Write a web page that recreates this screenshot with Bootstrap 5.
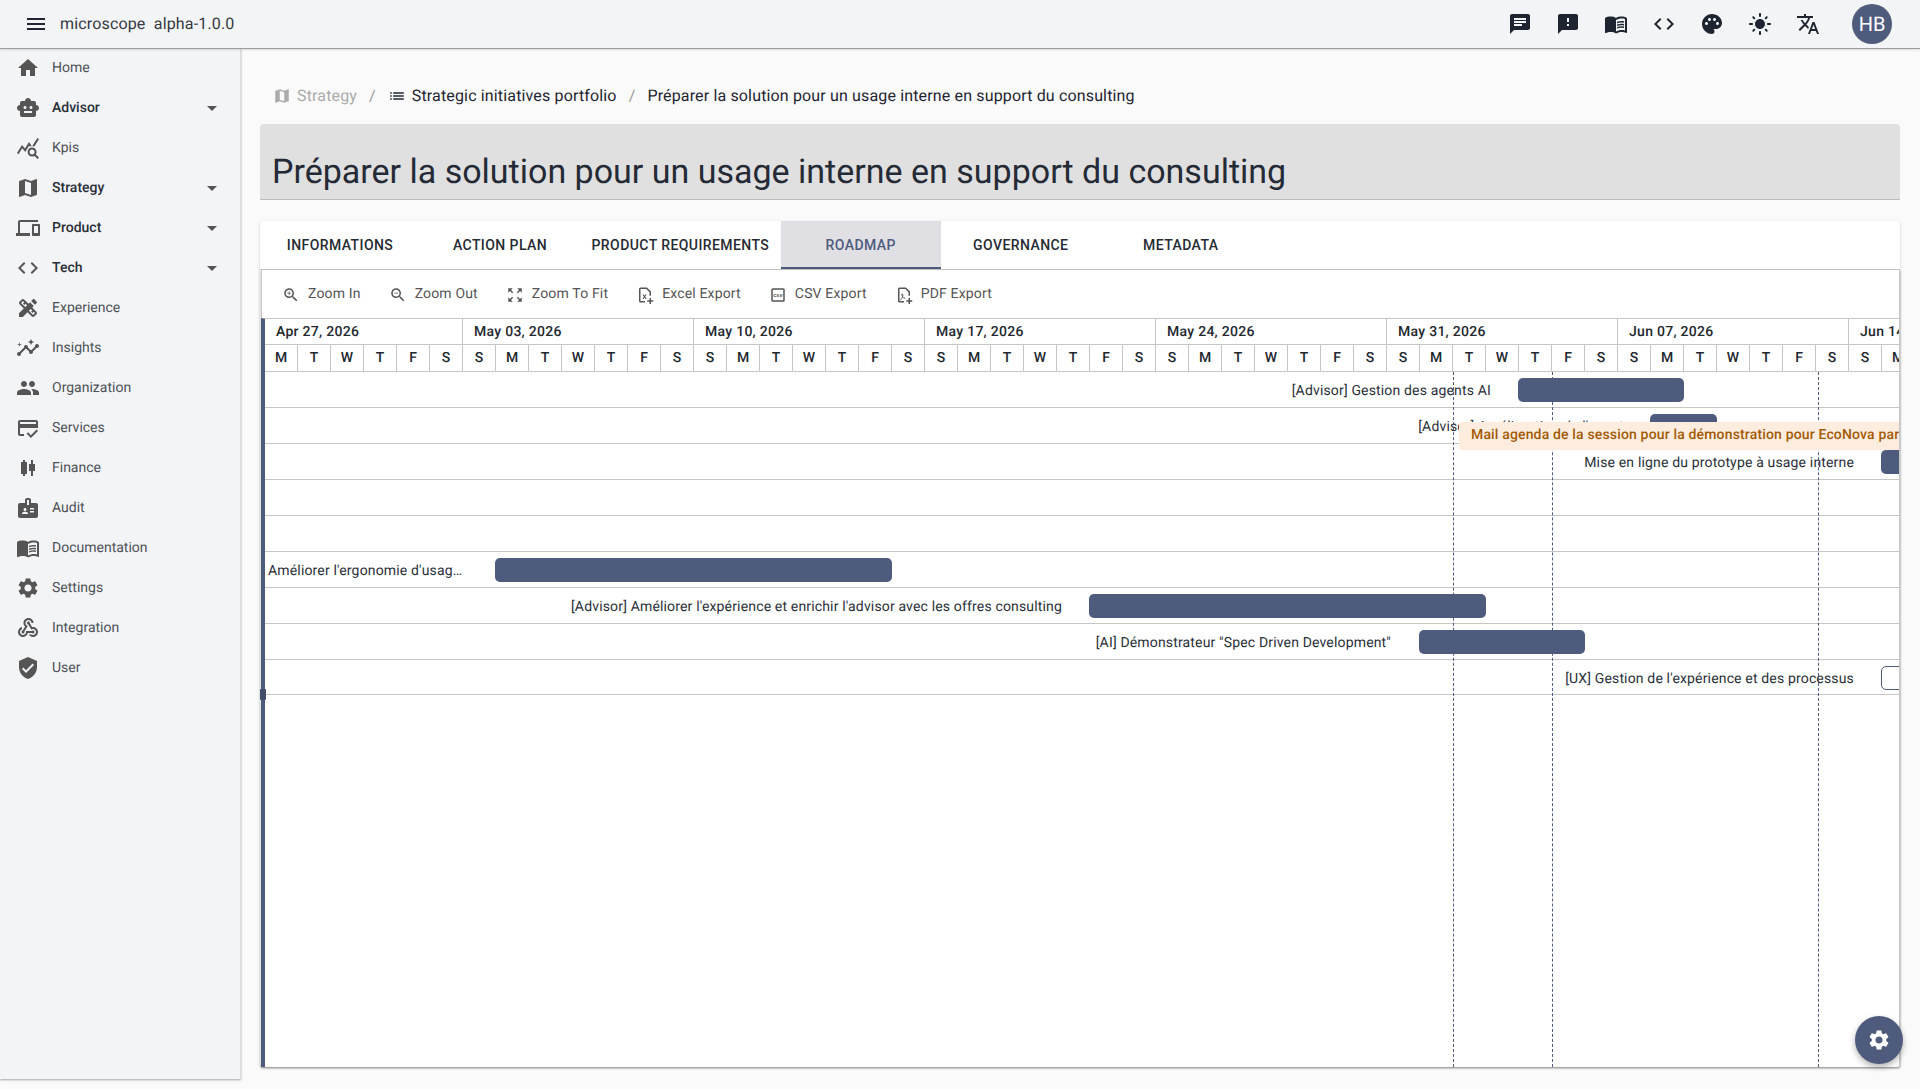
<!DOCTYPE html>
<html lang="fr">
<head>
<meta charset="utf-8">
<title>microscope</title>
<link rel="stylesheet" href="https://cdn.jsdelivr.net/npm/bootstrap@5.3.0/dist/css/bootstrap.min.css">
<style>
:root{--brand:#4f5b7d;--ink:#1f2530;--line:#c6c6c6}
html,body{height:100%}
body{font-family:Roboto,"Liberation Sans",sans-serif;background:#fafafa;color:var(--ink);overflow:hidden;font-size:14px;text-rendering:geometricPrecision}
.ic{width:24px;height:24px;fill:currentColor;flex:none;display:block}
.topbar{height:49px;background:#f3f4f6;border-bottom:1px solid #9c9c9c;padding:0 12px 0 24px;box-shadow:0 1px 2px rgba(0,0,0,.12);position:relative;z-index:3}
.brand-txt{font-size:16px;margin-left:12px;white-space:pre;color:#33393f;letter-spacing:.16px}
.top-ic{width:48px;display:flex;justify-content:center;color:var(--ink)}
.avatar{width:40px;height:40px;border-radius:50%;background:var(--brand);color:#fff;font-size:20px;margin-left:20px;margin-right:16px}
.sidenav{width:241px;flex:none;height:1031px;margin-top:-1px;background:#f3f4f6;border-right:1px solid #dfdfdf;box-shadow:0 1px 2px rgba(0,0,0,.35)}
.side-item{height:40px;padding:0 16px;color:#4d5157}
.side-item .lab{margin-left:12px;flex:1;padding-top:1px}
.side-item.par .lab{font-weight:500;color:#2a2f38}
.side-item .ic{color:#555}
.caret{width:24px;height:24px;fill:#555}
.content{flex:1;min-width:0;padding:0 20px 0 19px}
.crumbs{height:75px;padding:18px 0 0 13px;font-size:16px;letter-spacing:.15px}
.crumbs .ic{width:18px;height:18px}
.crumb-mute{color:#ababab}
.crumb-sep{color:#999;margin:0 12px}
.crumb-txt{margin-left:6px}
.headline{height:76px;background:#e0e0e0;border-bottom:1px solid #bdbdbd;border-radius:4px 4px 0 0;margin-bottom:21px;padding:24px 12px 0}
.headline h1{font-family:Roboto,sans-serif;font-weight:400;font-size:34px;margin:0;line-height:48px;color:#252b36}
.panel{background:#fff;height:846px;border-radius:4px;box-shadow:0 1px 3px rgba(0,0,0,.2);display:flex;flex-direction:column}
.tabbar{height:49px;border-bottom:1px solid var(--line);flex:none}
.tabx{min-width:160px;padding:0 11.5px;height:48px;display:flex;align-items:center;justify-content:center;text-transform:uppercase;font-weight:500;letter-spacing:.42px;color:#262b33;border:0;background:none;font-size:14px;white-space:nowrap}
.tabx.on{background:#e0e0e4;color:var(--brand);border-bottom:2px solid var(--brand);padding-top:2px}
.gwrap{flex:1;min-height:0;display:flex;flex-direction:column;position:relative;border-right:1px solid var(--line);margin-left:1px;border-left:1px solid var(--line);box-shadow:0 1px 2px rgba(0,0,0,.35)}
.tools{height:48px;flex:none;padding:1px 0 0 20px;gap:28px;color:#555}
.tool{display:flex;align-items:center;gap:8px;white-space:nowrap;letter-spacing:.16px}
.tool .ic{width:18px;height:18px}
.tool svg{fill:#555}
.csv-t{font-family:"Liberation Sans",sans-serif;font-size:7.5px;font-weight:700}
.gantt{flex:1;position:relative;overflow:hidden;border-top:1px solid var(--line);border-left:4px solid var(--brand);margin-left:-1px}
.gsplit{position:absolute;left:-2px;top:419px;width:6px;height:11px;background:#434d69;z-index:6;border-radius:1px}
.gweeks,.gdays{display:flex;border-bottom:1px solid var(--line);white-space:nowrap}
.gweeks{height:26px}
.gdays{height:27px}
.wk{flex:none;border-right:1px solid var(--line);padding-left:11px;font-weight:500;line-height:27px;color:#23282f;overflow:hidden;letter-spacing:.28px}
.dy{flex:none;width:33px;border-right:1px solid var(--line);text-align:center;font-weight:500;line-height:26px;color:#23282f}
.grow{height:36px;border-bottom:1px solid var(--line);position:relative}
.grow-end{height:35px}
.bar{position:absolute;top:6px;height:24px;background:var(--brand);border-radius:5px}
.bar.hollow{background:#fff;border:1px solid var(--brand)}
.lbl{position:absolute;top:0;line-height:38px;white-space:nowrap;color:#2a2f38;letter-spacing:.16px}
.todayline{position:absolute;top:53px;bottom:0;border-left:1px dashed var(--brand);z-index:2}
.hint{position:absolute;left:1194px;top:103px;right:0;height:28px;line-height:27px;background:#feeddf;color:#a35a05;font-weight:500;padding-left:12px;white-space:nowrap;overflow:hidden;border-radius:3px 0 0 3px;z-index:4;letter-spacing:.16px}
.fab{position:fixed;right:17px;bottom:25px;width:48px;height:48px;border-radius:50%;background:var(--brand);color:#fff;box-shadow:0 3px 6px rgba(0,0,0,.3);z-index:9;border:0}
</style>
</head>
<body>
<header class="topbar d-flex align-items-center">
  <svg class="ic" viewBox="0 0 24 24"><path d="M3 18h18v-2H3v2zm0-5h18v-2H3v2zm0-7v2h18V6H3z"/></svg>
  <span class="brand-txt">microscope  alpha-1.0.0</span>
  <div class="ms-auto d-flex align-items-center">
    <span class="top-ic"><svg class="ic" viewBox="0 0 24 24"><path d="M20 2H4c-1.1 0-1.99.9-1.99 2L2 22l4-4h14c1.1 0 2-.9 2-2V4c0-1.1-.9-2-2-2zM6 9h12v2H6V9zm8 5H6v-2h8v2zm4-6H6V6h12v2z"/></svg></span>
    <span class="top-ic"><svg class="ic" viewBox="0 0 24 24"><path d="M20 2H4c-1.1 0-1.99.9-1.99 2L2 22l4-4h14c1.1 0 2-.9 2-2V4c0-1.1-.9-2-2-2zm-7 12h-2v-2h2v2zm0-4h-2V6h2v4z"/></svg></span>
    <span class="top-ic"><svg class="ic" viewBox="0 0 24 24"><path d="M21 5c-1.11-.35-2.33-.5-3.5-.5-1.95 0-4.05.4-5.5 1.5-1.45-1.1-3.55-1.5-5.5-1.5S2.45 4.9 1 6v14.65c0 .25.25.5.5.5.1 0 .15-.05.25-.05C3.1 20.45 5.05 20 6.5 20c1.95 0 4.05.4 5.5 1.5 1.35-.85 3.8-1.5 5.5-1.5 1.65 0 3.35.3 4.75 1.05.1.05.15.05.25.05.25 0 .5-.25.5-.5V6c-.6-.45-1.25-.75-2-1zm0 13.5c-1.1-.35-2.3-.5-3.5-.5-1.7 0-4.15.65-5.5 1.5V8c1.35-.85 3.8-1.5 5.5-1.5 1.2 0 2.4.15 3.5.5v11.5z"/><path d="M17.5 10.5c.88 0 1.73.09 2.5.26V9.24c-.79-.15-1.64-.24-2.5-.24-1.7 0-3.24.29-4.5.83v1.66c1.13-.64 2.7-.99 4.5-.99zM13 12.49v1.66c1.13-.64 2.7-.99 4.5-.99.88 0 1.73.09 2.5.26V11.9c-.79-.15-1.64-.24-2.5-.24-1.7 0-3.24.3-4.5.83zM17.5 14.33c-1.7 0-3.24.29-4.5.83v1.66c1.13-.64 2.7-.99 4.5-.99.88 0 1.73.09 2.5.26v-1.52c-.79-.16-1.64-.24-2.5-.24z"/></svg></span>
    <span class="top-ic"><svg class="ic" viewBox="0 0 24 24"><path d="M9.4 16.6L4.8 12l4.6-4.6L8 6l-6 6 6 6 1.4-1.4zm5.2 0l4.6-4.6-4.6-4.6L16 6l6 6-6 6-1.4-1.4z"/></svg></span>
    <span class="top-ic"><svg class="ic" viewBox="0 0 24 24"><path d="M12 2C6.49 2 2 6.49 2 12s4.49 10 10 10c1.38 0 2.5-1.12 2.5-2.5 0-.61-.23-1.2-.64-1.67-.08-.1-.13-.21-.13-.33 0-.28.22-.5.5-.5H16c3.31 0 6-2.69 6-6 0-4.96-4.49-9-10-9zm-5.5 11c-.83 0-1.5-.67-1.5-1.5S5.67 10 6.5 10 8 10.67 8 11.5 7.33 13 6.5 13zm3-4C8.67 9 8 8.33 8 7.5S8.67 6 9.5 6s1.5.67 1.5 1.5S10.33 9 9.5 9zm5 0c-.83 0-1.5-.67-1.5-1.5S13.67 6 14.5 6s1.5.67 1.5 1.5S15.33 9 14.5 9zm3 4c-.83 0-1.5-.67-1.5-1.5s.67-1.5 1.5-1.5 1.5.67 1.5 1.5-.67 1.5-1.5 1.5z"/></svg></span>
    <span class="top-ic"><svg class="ic" viewBox="0 0 24 24"><path d="M12 7c-2.76 0-5 2.24-5 5s2.24 5 5 5 5-2.24 5-5-2.24-5-5-5zM2 13h2c.55 0 1-.45 1-1s-.45-1-1-1H2c-.55 0-1 .45-1 1s.45 1 1 1zm18 0h2c.55 0 1-.45 1-1s-.45-1-1-1h-2c-.55 0-1 .45-1 1s.45 1 1 1zM11 2v2c0 .55.45 1 1 1s1-.45 1-1V2c0-.55-.45-1-1-1s-1 .45-1 1zm0 18v2c0 .55.45 1 1 1s1-.45 1-1v-2c0-.55-.45-1-1-1s-1 .45-1 1zM5.99 4.58c-.39-.39-1.03-.39-1.41 0-.39.39-.39 1.03 0 1.41l1.06 1.06c.39.39 1.03.39 1.41 0s.39-1.03 0-1.41L5.99 4.58zm12.37 12.37c-.39-.39-1.03-.39-1.41 0-.39.39-.39 1.03 0 1.41l1.06 1.06c.39.39 1.03.39 1.41 0 .39-.39.39-1.03 0-1.41l-1.06-1.06zm1.06-10.96c.39-.39.39-1.03 0-1.41-.39-.39-1.03-.39-1.41 0l-1.06 1.06c-.39.39-.39 1.03 0 1.41s1.03.39 1.41 0l1.06-1.06zM7.05 18.36c.39-.39.39-1.03 0-1.41-.39-.39-1.03-.39-1.41 0l-1.06 1.06c-.39.39-.39 1.03 0 1.41s1.03.39 1.41 0l1.06-1.06z"/></svg></span>
    <span class="top-ic"><svg class="ic" viewBox="0 0 24 24"><path d="M12.87 15.07l-2.54-2.51.03-.03c1.74-1.94 2.98-4.17 3.71-6.53H17V4h-7V2H8v2H1v1.99h11.17C11.5 7.92 10.44 9.75 9 11.35 8.07 10.32 7.3 9.19 6.69 8h-2c.73 1.63 1.73 3.17 2.98 4.56l-5.09 5.02L4 19l5-5 3.11 3.11.76-2.04zM18.5 10h-2L12 22h2l1.12-3h4.75L21 22h2l-4.5-12zm-2.62 7l1.62-4.33L19.12 17h-3.24z"/></svg></span>
    <span class="avatar d-flex align-items-center justify-content-center">HB</span>
  </div>
</header>
<div class="d-flex">
  <nav class="sidenav">
    <div class="side-item d-flex align-items-center"><svg class="ic" viewBox="0 0 24 24"><path d="M10 20v-6h4v6h5v-8h3L12 3 2 12h3v8z"/></svg><span class="lab">Home</span></div>
    <div class="side-item par d-flex align-items-center"><svg class="ic" viewBox="0 0 24 24"><path d="M20 9V7c0-1.1-.9-2-2-2h-3c0-1.66-1.34-3-3-3S9 3.34 9 5H6c-1.1 0-2 .9-2 2v2c-1.66 0-3 1.34-3 3s1.34 3 3 3v4c0 1.1.9 2 2 2h12c1.1 0 2-.9 2-2v-4c1.66 0 3-1.34 3-3s-1.34-3-3-3zM7.5 11.5c0-.83.67-1.5 1.5-1.5s1.5.67 1.5 1.5S9.83 13 9 13s-1.5-.67-1.5-1.5zM16 17H8v-2h8v2zm-1-4c-.83 0-1.5-.67-1.5-1.5S14.17 10 15 10s1.5.67 1.5 1.5S15.83 13 15 13z"/></svg><span class="lab">Advisor</span><svg class="caret" viewBox="0 0 24 24"><path d="M7 10l5 5 5-5z"/></svg></div>
    <div class="side-item d-flex align-items-center"><svg class="ic" viewBox="0 0 24 24"><path d="M19.88 18.47c.44-.7.7-1.51.7-2.39 0-2.49-2.01-4.5-4.5-4.5s-4.5 2.01-4.5 4.5 2.01 4.5 4.49 4.5c.88 0 1.7-.26 2.39-.7L21.58 23 23 21.58l-3.12-3.11zm-3.8.11c-1.38 0-2.5-1.12-2.5-2.5s1.12-2.5 2.5-2.5 2.5 1.12 2.5 2.5-1.12 2.5-2.5 2.5zm-.36-8.5c-.74.02-1.45.18-2.1.45l-.55-.83-3.8 6.18-3.01-3.52-3.63 5.81L1 17l5-8 3 3.5L13 6zm2.59.5c-.64-.28-1.33-.45-2.05-.49L21.38 2 23 3.18l-4.69 7.4z"/></svg><span class="lab">Kpis</span></div>
    <div class="side-item par d-flex align-items-center"><svg class="ic" viewBox="0 0 24 24"><path d="M20.5 3l-.16.03L15 5.1 9 3 3.36 4.9c-.21.07-.36.25-.36.48V20.5c0 .28.22.5.5.5l.16-.03L9 18.9l6 2.1 5.64-1.9c.21-.07.36-.25.36-.48V3.5c0-.28-.22-.5-.5-.5zM15 19l-6-2.11V5l6 2.11V19z"/></svg><span class="lab">Strategy</span><svg class="caret" viewBox="0 0 24 24"><path d="M7 10l5 5 5-5z"/></svg></div>
    <div class="side-item par d-flex align-items-center"><svg class="ic" viewBox="0 0 24 24"><path d="M4 6h18V4H4c-1.1 0-2 .9-2 2v11H0v3h14v-3H4V6zm19 2h-6c-.55 0-1 .45-1 1v10c0 .55.45 1 1 1h6c.55 0 1-.45 1-1V9c0-.55-.45-1-1-1zm-1 9h-4v-7h4v7z"/></svg><span class="lab">Product</span><svg class="caret" viewBox="0 0 24 24"><path d="M7 10l5 5 5-5z"/></svg></div>
    <div class="side-item par d-flex align-items-center"><svg class="ic" viewBox="0 0 24 24"><path d="M9.4 16.6L4.8 12l4.6-4.6L8 6l-6 6 6 6 1.4-1.4zm5.2 0l4.6-4.6-4.6-4.6L16 6l6 6-6 6-1.4-1.4z"/></svg><span class="lab">Tech</span><svg class="caret" viewBox="0 0 24 24"><path d="M7 10l5 5 5-5z"/></svg></div>
    <div class="side-item d-flex align-items-center"><svg class="ic" viewBox="0 0 24 24"><path d="M16.24 11.51l1.57-1.57-3.75-3.75-1.57 1.57-4.14-4.13c-.78-.78-2.05-.78-2.83 0l-1.9 1.9c-.78.78-.78 2.05 0 2.83l4.13 4.13L3 17.25V21h3.75l4.76-4.76 4.13 4.13c.95.95 2.23.6 2.83 0l1.9-1.9c.78-.78.78-2.05 0-2.83l-4.13-4.13zm-7.06-.44L5.04 6.94l1.89-1.9L8.2 6.31 7.02 7.5l1.41 1.41 1.19-1.19 1.45 1.45-1.89 1.9zm7.88 7.89l-4.13-4.13 1.9-1.9 1.45 1.45-1.19 1.19 1.41 1.41 1.19-1.19 1.27 1.27-1.9 1.9zM20.71 7.04c.39-.39.39-1.02 0-1.41l-2.34-2.34c-.47-.47-1.12-.29-1.41 0l-1.83 1.83 3.75 3.75 1.83-1.83z"/></svg><span class="lab">Experience</span></div>
    <div class="side-item d-flex align-items-center"><svg class="ic" viewBox="0 0 24 24"><path d="M21 8c-1.45 0-2.26 1.44-1.93 2.51l-3.55 3.56c-.3-.09-.74-.09-1.04 0l-2.55-2.55C12.27 10.45 11.46 9 10 9c-1.45 0-2.27 1.44-1.93 2.52l-4.56 4.55C2.44 15.74 1 16.55 1 18c0 1.1.9 2 2 2 1.45 0 2.26-1.44 1.93-2.51l4.55-4.56c.3.09.74.09 1.04 0l2.55 2.55C12.73 16.55 13.54 18 15 18c1.45 0 2.27-1.44 1.93-2.52l3.56-3.55c1.07.33 2.51-.48 2.51-1.93 0-1.1-.9-2-2-2zM15 9l.94-2.07L18 6l-2.06-.93L15 3l-.92 2.07L12 6l2.08.93zM3.5 11L4 9l2-.5L4 8l-.5-2L3 8l-2 .5L3 9z"/></svg><span class="lab">Insights</span></div>
    <div class="side-item d-flex align-items-center"><svg class="ic" viewBox="0 0 24 24"><path d="M16 11c1.66 0 2.99-1.34 2.99-3S17.66 5 16 5c-1.66 0-3 1.34-3 3s1.34 3 3 3zm-8 0c1.66 0 2.99-1.34 2.99-3S9.66 5 8 5C6.34 5 5 6.34 5 8s1.34 3 3 3zm0 2c-2.33 0-7 1.17-7 3.5V19h14v-2.5c0-2.33-4.67-3.5-7-3.5zm8 0c-.29 0-.62.02-.97.05 1.16.84 1.97 1.97 1.97 3.45V19h6v-2.5c0-2.33-4.67-3.5-7-3.5z"/></svg><span class="lab">Organization</span></div>
    <div class="side-item d-flex align-items-center"><svg class="ic" viewBox="0 0 24 24"><path d="M20 4H4c-1.11 0-2 .89-2 2v12c0 1.11.89 2 2 2h4v-2H4v-6h18V6c0-1.11-.89-2-2-2zm0 4H4V6h16v2zm-5.07 11.17l-2.83-2.83-1.41 1.41L14.93 22 22 14.93l-1.41-1.41-5.66 5.65z"/></svg><span class="lab">Services</span></div>
    <div class="side-item d-flex align-items-center"><svg class="ic" viewBox="0 0 24 24"><path d="M9 4H7v2H5v12h2v2h2v-2h2V6H9V4zm10 4h-2V4h-2v4h-2v7h2v5h2v-5h2V8z"/></svg><span class="lab">Finance</span></div>
    <div class="side-item d-flex align-items-center"><svg class="ic" viewBox="0 0 24 24"><path d="M20 7h-5V4c0-1.1-.9-2-2-2h-2c-1.1 0-2 .9-2 2v3H4c-1.1 0-2 .9-2 2v11c0 1.1.9 2 2 2h16c1.1 0 2-.9 2-2V9c0-1.1-.9-2-2-2zM9 12c.83 0 1.5.67 1.5 1.5S9.83 15 9 15s-1.5-.67-1.5-1.5S8.17 12 9 12zm3 6H6v-.75c0-1 2-1.5 3-1.5s3 .5 3 1.5V18zm1-9h-2V4h2v5zm5 7.5h-4V15h4v1.5zm0-3h-4V12h4v1.5z"/></svg><span class="lab">Audit</span></div>
    <div class="side-item d-flex align-items-center"><svg class="ic" viewBox="0 0 24 24"><path d="M21 5c-1.11-.35-2.33-.5-3.5-.5-1.95 0-4.05.4-5.5 1.5-1.45-1.1-3.55-1.5-5.5-1.5S2.45 4.9 1 6v14.65c0 .25.25.5.5.5.1 0 .15-.05.25-.05C3.1 20.45 5.05 20 6.5 20c1.95 0 4.05.4 5.5 1.5 1.35-.85 3.8-1.5 5.5-1.5 1.65 0 3.35.3 4.75 1.05.1.05.15.05.25.05.25 0 .5-.25.5-.5V6c-.6-.45-1.25-.75-2-1zm0 13.5c-1.1-.35-2.3-.5-3.5-.5-1.7 0-4.15.65-5.5 1.5V8c1.35-.85 3.8-1.5 5.5-1.5 1.2 0 2.4.15 3.5.5v11.5z"/><path d="M17.5 10.5c.88 0 1.73.09 2.5.26V9.24c-.79-.15-1.64-.24-2.5-.24-1.7 0-3.24.29-4.5.83v1.66c1.13-.64 2.7-.99 4.5-.99zM13 12.49v1.66c1.13-.64 2.7-.99 4.5-.99.88 0 1.73.09 2.5.26V11.9c-.79-.15-1.64-.24-2.5-.24-1.7 0-3.24.3-4.5.83zM17.5 14.33c-1.7 0-3.24.29-4.5.83v1.66c1.13-.64 2.7-.99 4.5-.99.88 0 1.73.09 2.5.26v-1.52c-.79-.16-1.64-.24-2.5-.24z"/></svg><span class="lab">Documentation</span></div>
    <div class="side-item d-flex align-items-center"><svg class="ic" viewBox="0 0 24 24"><path d="M19.14 12.94c.04-.3.06-.61.06-.94 0-.32-.02-.64-.07-.94l2.03-1.58c.18-.14.23-.41.12-.61l-1.92-3.32c-.12-.22-.37-.29-.59-.22l-2.39.96c-.5-.38-1.03-.7-1.62-.94l-.36-2.54c-.04-.24-.24-.41-.48-.41h-3.84c-.24 0-.43.17-.47.41l-.36 2.54c-.59.24-1.13.57-1.62.94l-2.39-.96c-.22-.08-.47 0-.59.22L2.74 8.87c-.12.21-.08.47.12.61l2.03 1.58c-.05.3-.09.63-.09.94s.02.64.07.94l-2.03 1.58c-.18.14-.23.41-.12.61l1.92 3.32c.12.22.37.29.59.22l2.39-.96c.5.38 1.03.7 1.62.94l.36 2.54c.05.24.24.41.48.41h3.84c.24 0 .44-.17.47-.41l.36-2.54c.59-.24 1.13-.56 1.62-.94l2.39.96c.22.08.47 0 .59-.22l1.92-3.32c.12-.22.07-.47-.12-.61l-2.01-1.58zM12 15.6c-1.98 0-3.6-1.62-3.6-3.6s1.62-3.6 3.6-3.6 3.6 1.62 3.6 3.6-1.62 3.6-3.6 3.6z"/></svg><span class="lab">Settings</span></div>
    <div class="side-item d-flex align-items-center"><svg class="ic" viewBox="0 0 24 24"><path d="M10 15h5.88c.27-.31.67-.5 1.12-.5.83 0 1.5.67 1.5 1.5s-.67 1.5-1.5 1.5c-.44 0-.84-.19-1.12-.5H11.9c-.46 2.28-2.48 4-4.9 4-2.76 0-5-2.24-5-5 0-2.42 1.72-4.44 4-4.9v2.07c-1.16.41-2 1.53-2 2.83 0 1.65 1.35 3 3 3s3-1.35 3-3v-1zm2.5-11c1.65 0 3 1.35 3 3h2c0-2.76-2.24-5-5-5s-5 2.24-5 5c0 1.43.6 2.71 1.55 3.62l-2.35 3.9C6.02 14.66 5.5 15.27 5.5 16c0 .83.67 1.5 1.5 1.5s1.5-.67 1.5-1.5c0-.16-.02-.31-.07-.45l3.38-5.63C10.49 9.61 9.5 8.42 9.5 7c0-1.65 1.35-3 3-3zm4.5 9c-.64 0-1.23.2-1.72.54l-3.05-5.07C11.53 8.35 11 7.74 11 7c0-.83.67-1.5 1.5-1.5S14 6.17 14 7c0 .15-.02.29-.06.43l2.19 3.65c.28-.05.57-.08.87-.08 2.76 0 5 2.24 5 5s-2.24 5-5 5c-1.85 0-3.47-1.01-4.33-2.5h2.67c.48.32 1.05.5 1.66.5 1.65 0 3-1.35 3-3s-1.35-3-3-3z"/></svg><span class="lab">Integration</span></div>
    <div class="side-item d-flex align-items-center"><svg class="ic" viewBox="0 0 24 24"><path d="M12 1L3 5v6c0 5.55 3.84 10.74 9 12 5.16-1.26 9-6.45 9-12V5l-9-4zm-2 16l-4-4 1.41-1.41L10 14.17l6.59-6.59L18 9l-8 8z"/></svg><span class="lab">User</span></div>
  </nav>
  <main class="content">
    <div class="crumbs d-flex align-items-center">
      <svg class="ic crumb-mute" viewBox="0 0 24 24"><path d="M20.5 3l-.16.03L15 5.1 9 3 3.36 4.9c-.21.07-.36.25-.36.48V20.5c0 .28.22.5.5.5l.16-.03L9 18.9l6 2.1 5.64-1.9c.21-.07.36-.25.36-.48V3.5c0-.28-.22-.5-.5-.5zM15 19l-6-2.11V5l6 2.11V19z"/></svg>
      <span class="crumb-mute crumb-txt">Strategy</span><span class="crumb-sep">/</span>
      <svg class="ic" viewBox="0 0 24 24"><path d="M3 13h2v-2H3v2zm0 4h2v-2H3v2zm0-8h2V7H3v2zm4 4h14v-2H7v2zm0 4h14v-2H7v2zM7 7v2h14V7H7z"/></svg>
      <span class="crumb-txt">Strategic initiatives portfolio</span><span class="crumb-sep">/</span>
      <span>Préparer la solution pour un usage interne en support du consulting</span>
    </div>
    <div class="headline"><h1>Préparer la solution pour un usage interne en support du consulting</h1></div>
    <section class="panel">
      <div class="tabbar d-flex">
        <button class="tabx">Informations</button>
        <button class="tabx">Action plan</button>
        <button class="tabx">Product requirements</button>
        <button class="tabx on">Roadmap</button>
        <button class="tabx">Governance</button>
        <button class="tabx">Metadata</button>
      </div>
      <div class="gwrap">
        <div class="tools d-flex align-items-center">
          <span class="tool"><svg class="ic" viewBox="0 0 24 24"><path d="M15.5 14h-.79l-.28-.27C15.41 12.59 16 11.11 16 9.5 16 5.91 13.09 3 9.5 3S3 5.91 3 9.5 5.91 16 9.5 16c1.61 0 3.09-.59 4.23-1.57l.27.28v.79l5 4.99L20.49 19l-4.99-5zm-6 0C7.01 14 5 11.99 5 9.5S7.01 5 9.5 5 14 7.01 14 9.5 11.99 14 9.5 14zm.5-7H9v2H7v1h2v2h1v-2h2V9h-2z"/></svg>Zoom In</span>
          <span class="tool"><svg class="ic" viewBox="0 0 24 24"><path d="M15.5 14h-.79l-.28-.27C15.41 12.59 16 11.11 16 9.5 16 5.91 13.09 3 9.5 3S3 5.91 3 9.5 5.91 16 9.5 16c1.61 0 3.09-.59 4.23-1.57l.27.28v.79l5 4.99L20.49 19l-4.99-5zm-6 0C7.01 14 5 11.99 5 9.5S7.01 5 9.5 5 14 7.01 14 9.5 11.99 14 9.5 14zM7 9h5v1H7z"/></svg>Zoom Out</span>
          <span class="tool"><svg class="ic" viewBox="0 0 24 24"><path d="M15 3l2.3 2.3-2.89 2.87 1.42 1.42L18.7 6.7 21 9V3h-6zM3 9l2.3-2.3 2.87 2.89 1.42-1.42L6.7 5.3 9 3H3v6zm6 12l-2.3-2.3 2.89-2.87-1.42-1.42L5.3 17.3 3 15v6h6zm12-6l-2.3 2.3-2.87-2.89-1.42 1.42 2.89 2.87L15 21h6v-6z"/></svg>Zoom To Fit</span>
          <span class="tool"><svg class="ic" viewBox="0 0 24 24"><path d="M6 2h8.6L20 7.4V13h-2V8.2L13.8 4H6v16h6v2H6a2 2 0 0 1-2-2V4a2 2 0 0 1 2-2zM8.6 11.2h1.7l1.1 1.9 1.1-1.9h1.7l-1.9 3 1.9 3h-1.7l-1.1-1.9-1.1 1.9H8.6l1.9-3zM18 16h2v3h3v2h-3v3h-2v-3h-3v-2h3z"/></svg>Excel Export</span>
          <span class="tool"><svg class="ic" viewBox="0 0 24 24"><path d="M5 3h14a2 2 0 0 1 2 2v14a2 2 0 0 1-2 2H5a2 2 0 0 1-2-2V5a2 2 0 0 1 2-2zm0 2v14h14V5z"/><text class="csv-t" x="12" y="14.6" text-anchor="middle">csv</text></svg>CSV Export</span>
          <span class="tool"><svg class="ic" viewBox="0 0 24 24"><path d="M6 2h8.6L20 7.4V13h-2V8.2L13.8 4H6v16h6v2H6a2 2 0 0 1-2-2V4a2 2 0 0 1 2-2zM18 16h2v3h3v2h-3v3h-2v-3h-3v-2h3z"/><path d="M7 19c1.6-1.4 2.7-3.3 3.3-5.5.3-1.3.2-3-.6-3-.9 0-.8 2 .2 3.6.8 1.2 2 2 3.8 2.2" fill="none" stroke="#555" stroke-width="1.3"/></svg>PDF Export</span>
        </div>
        <div class="gantt">
          <div class="gweeks">
            <span class="wk" style="width:198px">Apr 27, 2026</span>
            <span class="wk" style="width:231px">May 03, 2026</span>
            <span class="wk" style="width:231px">May 10, 2026</span>
            <span class="wk" style="width:231px">May 17, 2026</span>
            <span class="wk" style="width:231px">May 24, 2026</span>
            <span class="wk" style="width:231px">May 31, 2026</span>
            <span class="wk" style="width:231px">Jun 07, 2026</span>
            <span class="wk" style="width:231px">Jun 14, 2026</span>
          </div>
          <div class="gdays">
            <span class="dy">M</span><span class="dy">T</span><span class="dy">W</span><span class="dy">T</span><span class="dy">F</span><span class="dy">S</span>
            <span class="dy">S</span><span class="dy">M</span><span class="dy">T</span><span class="dy">W</span><span class="dy">T</span><span class="dy">F</span><span class="dy">S</span>
            <span class="dy">S</span><span class="dy">M</span><span class="dy">T</span><span class="dy">W</span><span class="dy">T</span><span class="dy">F</span><span class="dy">S</span>
            <span class="dy">S</span><span class="dy">M</span><span class="dy">T</span><span class="dy">W</span><span class="dy">T</span><span class="dy">F</span><span class="dy">S</span>
            <span class="dy">S</span><span class="dy">M</span><span class="dy">T</span><span class="dy">W</span><span class="dy">T</span><span class="dy">F</span><span class="dy">S</span>
            <span class="dy">S</span><span class="dy">M</span><span class="dy">T</span><span class="dy">W</span><span class="dy">T</span><span class="dy">F</span><span class="dy">S</span>
            <span class="dy">S</span><span class="dy">M</span><span class="dy">T</span><span class="dy">W</span><span class="dy">T</span><span class="dy">F</span><span class="dy">S</span>
            <span class="dy">S</span><span class="dy">M</span>
          </div>
          <div class="grow"><span class="lbl" style="right:408px">[Advisor] Gestion des agents AI</span><span class="bar" style="left:1253px;width:166px"></span></div>
          <div class="grow"><span class="lbl" style="right:275px">[Advisor] Amélioration de l'agent</span><span class="bar" style="left:1385px;width:67px"></span></div>
          <div class="grow"><span class="lbl" style="right:45px">Mise en ligne du prototype à usage interne</span><span class="bar" style="left:1616px;width:60px"></span></div>
          <div class="grow"></div>
          <div class="grow"></div>
          <div class="grow"><span class="lbl" style="left:3px">Améliorer l'ergonomie d'usag…</span><span class="bar" style="left:230px;width:397px"></span></div>
          <div class="grow"><span class="lbl" style="right:837px">[Advisor] Améliorer l'expérience et enrichir l'advisor avec les offres consulting</span><span class="bar" style="left:824px;width:397px"></span></div>
          <div class="grow"><span class="lbl" style="right:508px">[AI] Démonstrateur "Spec Driven Development"</span><span class="bar" style="left:1154px;width:166px"></span></div>
          <div class="grow grow-end"><span class="lbl" style="right:45px">[UX] Gestion de l'expérience et des processus</span><span class="bar hollow" style="left:1616px;width:60px"></span></div>
          <span class="todayline" style="left:1188px"></span>
          <span class="todayline" style="left:1287px"></span>
          <span class="todayline" style="left:1553px"></span>
          <div class="hint">Mail agenda de la session pour la démonstration pour EcoNova par le consultant</div>
        </div>
        <span class="gsplit"></span>
      </div>
    </section>
  </main>
</div>
<button class="fab d-flex align-items-center justify-content-center"><svg class="ic" viewBox="0 0 24 24"><path d="M19.14 12.94c.04-.3.06-.61.06-.94 0-.32-.02-.64-.07-.94l2.03-1.58c.18-.14.23-.41.12-.61l-1.92-3.32c-.12-.22-.37-.29-.59-.22l-2.39.96c-.5-.38-1.03-.7-1.62-.94l-.36-2.54c-.04-.24-.24-.41-.48-.41h-3.84c-.24 0-.43.17-.47.41l-.36 2.54c-.59.24-1.13.57-1.62.94l-2.39-.96c-.22-.08-.47 0-.59.22L2.74 8.87c-.12.21-.08.47.12.61l2.03 1.58c-.05.3-.09.63-.09.94s.02.64.07.94l-2.03 1.58c-.18.14-.23.41-.12.61l1.92 3.32c.12.22.37.29.59.22l2.39-.96c.5.38 1.03.7 1.62.94l.36 2.54c.05.24.24.41.48.41h3.84c.24 0 .44-.17.47-.41l.36-2.54c.59-.24 1.13-.56 1.62-.94l2.39.96c.22.08.47 0 .59-.22l1.92-3.32c.12-.22.07-.47-.12-.61l-2.01-1.58zM12 15.6c-1.98 0-3.6-1.62-3.6-3.6s1.62-3.6 3.6-3.6 3.6 1.62 3.6 3.6-1.62 3.6-3.6 3.6z"/></svg></button>
<script src="https://cdn.jsdelivr.net/npm/bootstrap@5.3.0/dist/js/bootstrap.bundle.min.js"></script>
</body>
</html>
